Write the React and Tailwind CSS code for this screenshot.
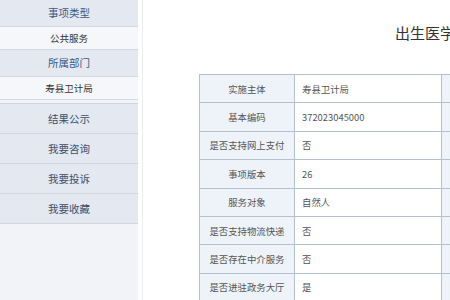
const menu = [
  { type: "head", label: "事项类型" },
  { type: "item", label: "公共服务" },
  { type: "head", label: "所属部门" },
  { type: "item", label: "寿县卫计局" },
];

const actions = ["结果公示", "我要咨询", "我要投诉", "我要收藏"];

const rows = [
  ["实施主体", "寿县卫计局"],
  ["基本编码", "372023045000"],
  ["是否支持网上支付", "否"],
  ["事项版本", "26"],
  ["服务对象", "自然人"],
  ["是否支持物流快递", "否"],
  ["是否存在中介服务", "否"],
  ["是否进驻政务大厅", "是"],
  ["", ""],
];

export default function App() {
  return (
    <div
      className="flex w-[450px] h-[300px] overflow-hidden bg-white"
      style={{ fontFamily: '"Noto Sans CJK SC", "Noto Sans", sans-serif' }}
    >
      {/* sidebar */}
      <div className="w-[138px] shrink-0 bg-[#f1f3f8] flex flex-col">
        {menu.map((m, i) =>
          m.type === "head" ? (
            <div
              key={i}
              className="h-[27px] flex items-center justify-center bg-[#e3e8f1] border-b border-[#d3d9e4] text-[10.5px] text-[#3d5a85]"
            >
              {m.label}
            </div>
          ) : (
            <div
              key={i}
              className="h-[23px] flex items-center justify-center bg-[#f6f7fa] border-b border-[#d3d9e4] text-[9.5px] text-[#333]"
            >
              {m.label}
            </div>
          )
        )}
        <div className="h-[3px] bg-[#f1f3f8]" />
        {actions.map((a) => (
          <div
            key={a}
            className="h-[30px] flex items-center justify-center bg-[#e3e8f1] border-t border-[#d0d6e0] text-[10.5px] text-[#3d4e6a]"
          >
            {a}
          </div>
        ))}
        <div className="border-t border-[#d0d6e0]" />
      </div>

      {/* main */}
      <div className="flex-1 min-w-0 relative border-l border-[#eceef2] ml-[4px] overflow-hidden">
        <div className="pt-[24px] pl-[252px] whitespace-nowrap text-[15px] text-[#333] leading-[18px]">
          出生医学证明办理
        </div>
        <table className="mt-[32px] ml-[56px] w-[310px] min-w-[310px] border-collapse text-[9.4px] text-[#555] table-fixed whitespace-nowrap">
          <colgroup>
            <col className="w-[95px]" />
            <col className="w-[147px]" />
            <col className="w-[68px]" />
          </colgroup>
          <tbody>
            {rows.map(([k, v], i) => (
              <tr key={i} className="h-[28.4px]">
                <td className="border border-[#b3c0cd] bg-[#eef3fa] text-center p-0">
                  {k}
                </td>
                <td className="border border-[#b3c0cd] bg-white pl-[7px] p-0 text-left">
                  {v}
                </td>
                <td className="border border-[#b3c0cd] bg-[#eef3fa] p-0" />
              </tr>
            ))}
          </tbody>
        </table>
      </div>
    </div>
  );
}
